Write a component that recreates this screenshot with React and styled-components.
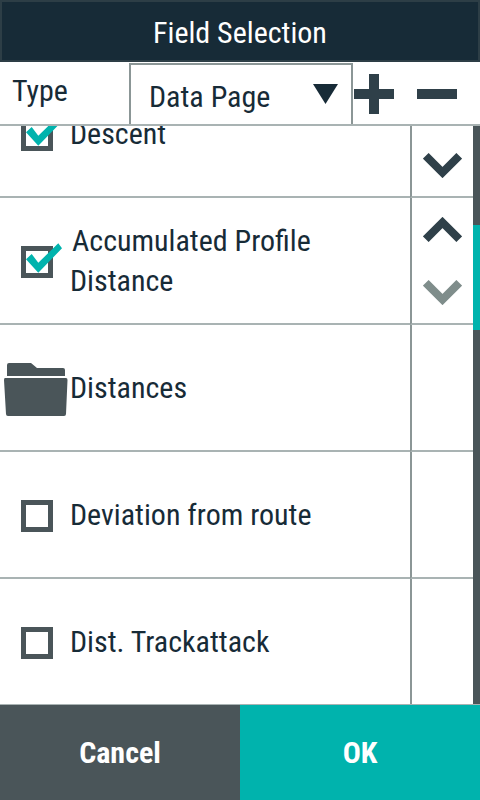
import React from "react";
import styled, { createGlobalStyle } from "styled-components";

const Global = createGlobalStyle`
  html, body { margin: 0; padding: 0; background: #fff; }
  body { font-family: "Roboto Condensed", Roboto, "Liberation Sans", sans-serif; }
  * { box-sizing: border-box; }
`;
const Page = styled.div`
  width: 480px; height: 800px; display: flex; flex-direction: column; overflow: hidden; background: #fff;
`;
const Header = styled.header`
  height: 62px; flex: none; background: #172b37; border: 2px solid #2d3e46; padding-top: 4px;
  display: flex; align-items: center; justify-content: center;
`;
const Label = styled.span`
  display: block; white-space: nowrap; font-size: 30px; line-height: 40px; font-weight: ${p => p.$weight || 400};
  color: ${p => p.$color || "#172b37"};
`;
const Toolbar = styled.div`
  height: 64px; flex: none; display: flex; border-bottom: 2px solid #a9b3b3; padding-top: 1px;
`;
const TypeCell = styled.div`
  width: 129px; padding: 0 0 5px 12px; display: flex; align-items: center;
`;
const Dropdown = styled.div`
  width: 224px; border: solid #8b9696; border-width: 2px 2px 0 2px; padding: 5px 13px 0 18px;
  display: flex; align-items: center; justify-content: space-between;
`;
const Caret = styled.svg`
  display: block; flex: none; width: 25px; height: 20px; margin-top: -7px; fill: #172b37;
`;
const ToolIcon = styled.svg`
  display: block; flex: none; align-self: center; width: 40px; height: 40px; margin-left: ${p => p.$gap}px; fill: #2f4049;
`;
const Body = styled.div`
  flex: 1; min-height: 0; display: flex; overflow: hidden;
`;
const List = styled.div`
  flex: 1; min-width: 0; overflow: hidden;
`;
const Rows = styled.div`
  margin-top: -55px;
`;
const Row = styled.div`
  height: 127px; display: flex; align-items: center; border-bottom: 2px solid #a9b3b3; padding-left: 21px;
`;
const Box = styled.div`
  position: relative; flex: none; width: 32px; height: 32px; border: 5px solid #4a5559; margin: 3px 17px 0 0;
`;
const Check = styled.svg`
  position: absolute; left: 0; top: -8px; width: 37px; height: 32px; fill: #00b3ad;
`;
const FolderIcon = styled.svg`
  display: block; flex: none; width: 64px; height: 54px; margin: 2px 2px 0 -17px; fill: #4a5559;
`;
const RowText = styled.div`
  min-width: 0;
`;
const TextLine = styled.div`
  padding-left: ${p => p.$indent || 0}px;
`;
const Side = styled.div`
  width: 63px; flex: none; display: flex; flex-direction: column;
`;
const SideCell = styled.div`
  height: ${p => p.$h}px; flex: none; border-bottom: 2px solid #a9b3b3; border-left: 2px solid #8b9696;
  padding-top: ${p => p.$pad || 0}px;
  display: flex; flex-direction: column; align-items: center; justify-content: center; gap: 38px;
`;
const Chevron = styled.svg`
  display: block; flex: none; width: 39px; height: 25px; fill: none; stroke: ${p => p.$muted ? "#7f8d8b" : "#2f4049"};
  stroke-width: 8;
`;
const Track = styled.div`
  width: 7px; flex: none; background: #4a5559; position: relative;
`;
const Thumb = styled.div`
  position: absolute; left: 0; right: 0; top: 99px; height: 105px; background: #00b3ad;
`;
const Footer = styled.footer`
  height: 96px; flex: none; display: flex; border-top: 1px solid #a9b3b3;
`;
const FooterButton = styled.button`
  flex: 1; border: 0; padding: 0; margin: 0; background: ${p => p.$primary ? "#00b3ad" : "#4a5559"};
  display: flex; align-items: center; justify-content: center; font: inherit;
`;

const CheckBox = ({ checked }) => (
  <Box>
    {checked && (
      <Check viewBox="0 0 37 32">
        <path d="M0 16.300L5.700 11L12.300 19.700L32.300 0.300L36 5.300L12.300 29.700Z" />
      </Check>
    )}
  </Box>
);
const Down = ({ muted }) => (
  <Chevron $muted={muted} viewBox="0 0 39 25"><path d="M2.800 2.800L19.500 19.500L36.200 2.800" /></Chevron>
);
const Up = () => (
  <Chevron viewBox="0 0 39 25"><path d="M2.800 22.200L19.500 5.500L36.200 22.200" /></Chevron>
);

export default function App() {
  return (
    <Page>
      <Global />
      <Header><Label $color="#fff">Field Selection</Label></Header>
      <Toolbar>
        <TypeCell><Label>Type</Label></TypeCell>
        <Dropdown>
          <Label>Data Page</Label>
          <Caret viewBox="0 0 25 20"><path d="M0 0H25L12.500 20Z" /></Caret>
        </Dropdown>
        <ToolIcon $gap={1} viewBox="0 0 40 40"><path d="M15 0H25V15H40V25H25V40H15V25H0V15H15Z" /></ToolIcon>
        <ToolIcon $gap={23} viewBox="0 0 40 40"><path d="M0 15H40V25H0Z" /></ToolIcon>
      </Toolbar>
      <Body>
        <List>
          <Rows>
            <Row><CheckBox checked /><RowText><Label>Descent</Label></RowText></Row>
            <Row>
              <CheckBox checked />
              <RowText>
                <TextLine $indent={2}><Label>Accumulated Profile</Label></TextLine>
                <TextLine><Label>Distance</Label></TextLine>
              </RowText>
            </Row>
            <Row>
              <FolderIcon viewBox="0 0 64 54">
                <path d="M3 14V3Q3 1 5 1H27L33 6H59Q61 6 61 8V14Z" />
                <path d="M1 16H62Q63.500 16 63.500 18L62 52Q62 54 60 54H4Q2 54 2 52L0 18Q0 16 1 16Z" />
              </FolderIcon>
              <RowText><Label>Distances</Label></RowText>
            </Row>
            <Row><CheckBox /><RowText><Label>Deviation from route</Label></RowText></Row>
            <Row><CheckBox /><RowText><Label>Dist. Trackattack</Label></RowText></Row>
          </Rows>
        </List>
        <Side>
          <SideCell $h={72} $pad={9}><Down /></SideCell>
          <SideCell $h={127}><Up /><Down muted /></SideCell>
          <SideCell $h={127} />
          <SideCell $h={127} />
          <SideCell $h={127} />
        </Side>
        <Track><Thumb /></Track>
      </Body>
      <Footer>
        <FooterButton><Label $color="#fff" $weight={700}>Cancel</Label></FooterButton>
        <FooterButton $primary><Label $color="#fff" $weight={700}>OK</Label></FooterButton>
      </Footer>
    </Page>
  );
}
